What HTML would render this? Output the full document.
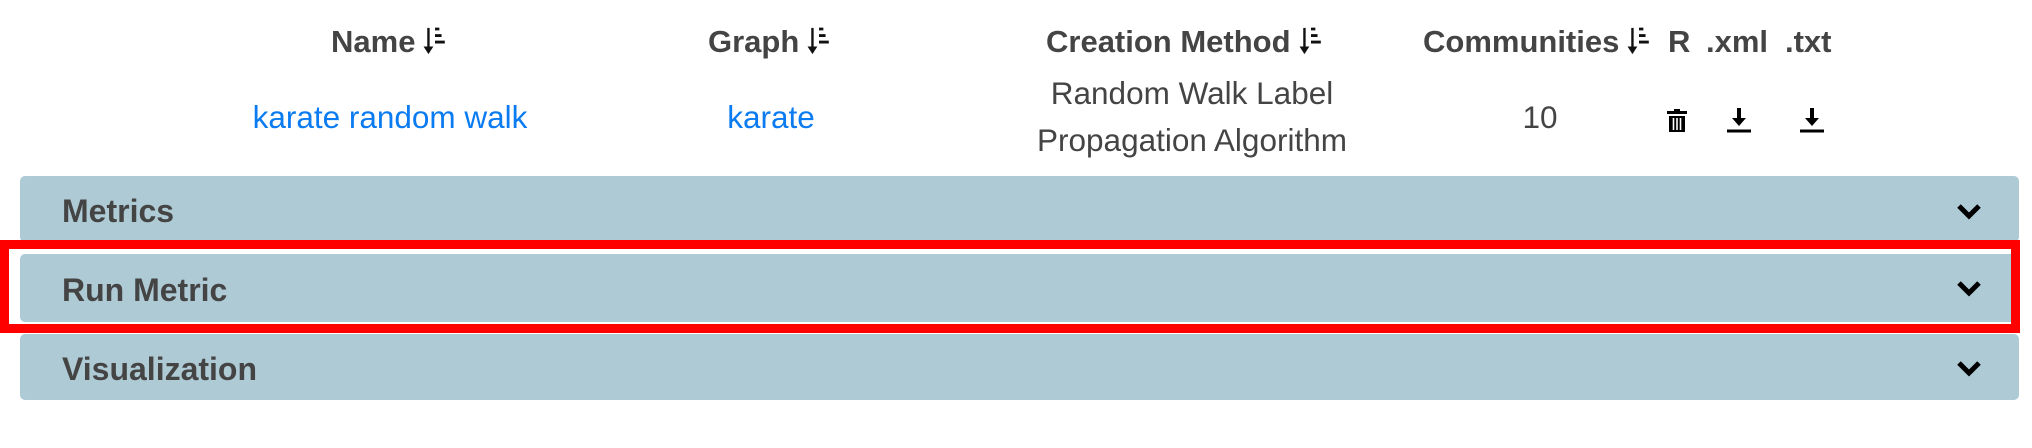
<!DOCTYPE html>
<html><head><meta charset="utf-8"><style>
html,body{margin:0;padding:0;background:#fff;}
body{width:2032px;height:448px;position:relative;overflow:hidden;font-family:"Liberation Sans",sans-serif;color:#444;}
.h{position:absolute;top:22px;font-weight:bold;font-size:31px;line-height:40px;white-space:nowrap;}
.c{position:absolute;white-space:nowrap;font-size:31.5px;transform:translateX(-50%);text-align:center;}
.a{color:#0a7bf0;}
.si{display:inline-block;vertical-align:-4px;margin-left:8px;}
.p{position:absolute;left:20px;width:1999px;background:#aecad5;border-radius:5px;}
.p span{position:absolute;left:42px;font-weight:bold;font-size:32px;color:#444;}
.chev{position:absolute;left:1936px;}
.red{position:absolute;left:0;top:240px;width:2002px;height:75px;border:9px solid #ff0000;}
</style></head><body>
<div class="h" style="left:331px">Name<svg class="si" width="24" height="30" viewBox="0 0 22 26"><path d="M5 1v20" stroke="#111" stroke-width="2.2"/><path d="M0.5 18l4.5 7 4.5-7z" fill="#111"/><path d="M11 2h4M11 8h6M11 14h9" stroke="#111" stroke-width="2.6"/></svg></div>
<div class="h" style="left:708px">Graph<svg class="si" width="24" height="30" viewBox="0 0 22 26"><path d="M5 1v20" stroke="#111" stroke-width="2.2"/><path d="M0.5 18l4.5 7 4.5-7z" fill="#111"/><path d="M11 2h4M11 8h6M11 14h9" stroke="#111" stroke-width="2.6"/></svg></div>
<div class="h" style="left:1046px">Creation Method<svg class="si" width="24" height="30" viewBox="0 0 22 26"><path d="M5 1v20" stroke="#111" stroke-width="2.2"/><path d="M0.5 18l4.5 7 4.5-7z" fill="#111"/><path d="M11 2h4M11 8h6M11 14h9" stroke="#111" stroke-width="2.6"/></svg></div>
<div class="h" style="left:1423px">Communities<svg class="si" width="24" height="30" viewBox="0 0 22 26"><path d="M5 1v20" stroke="#111" stroke-width="2.2"/><path d="M0.5 18l4.5 7 4.5-7z" fill="#111"/><path d="M11 2h4M11 8h6M11 14h9" stroke="#111" stroke-width="2.6"/></svg></div>
<div class="h" style="left:1668px">R</div>
<div class="h" style="left:1706px">.xml</div>
<div class="h" style="left:1785px">.txt</div>

<div class="c a" style="left:390px;top:97px;line-height:40px">karate random walk</div>
<div class="c a" style="left:771px;top:97px;line-height:40px">karate</div>
<div class="c" style="left:1192px;top:70px;line-height:47px">Random Walk Label<br>Propagation Algorithm</div>
<div class="c" style="left:1540px;top:97px;line-height:40px">10</div>

<svg style="position:absolute;left:1666px;top:106px" width="22" height="28" viewBox="0 0 22 28"><path d="M8 3h6v2h7v3H1V5h7z" fill="#000"/><path d="M3 10h16v16H3z" fill="#000"/><path d="M7.5 12v12M11 12v12M14.5 12v12" stroke="#fff" stroke-width="1.6"/></svg>
<svg style="position:absolute;left:1726px;top:106px" width="26" height="28" viewBox="0 0 26 28"><path d="M11 2h4v10h5l-7 8-7-8h5z" fill="#000"/><path d="M1 25h24" stroke="#000" stroke-width="3"/></svg>
<svg style="position:absolute;left:1799px;top:106px" width="26" height="28" viewBox="0 0 26 28"><path d="M11 2h4v10h5l-7 8-7-8h5z" fill="#000"/><path d="M1 25h24" stroke="#000" stroke-width="3"/></svg>

<div class="p" style="top:176px;height:66px"><span style="top:17px">Metrics</span>
<svg class="chev" style="top:27px" width="26" height="18" viewBox="0 0 26 18"><path d="M3 3l10 10 10-10" fill="none" stroke="#000" stroke-width="5"/></svg></div>
<div class="p" style="top:254px;height:68px"><span style="top:18px">Run Metric</span>
<svg class="chev" style="top:26px" width="26" height="18" viewBox="0 0 26 18"><path d="M3 3l10 10 10-10" fill="none" stroke="#000" stroke-width="5"/></svg></div>
<div class="p" style="top:334px;height:66px"><span style="top:17px">Visualization</span>
<svg class="chev" style="top:26px" width="26" height="18" viewBox="0 0 26 18"><path d="M3 3l10 10 10-10" fill="none" stroke="#000" stroke-width="5"/></svg></div>
<div class="red"></div>
</body></html>
